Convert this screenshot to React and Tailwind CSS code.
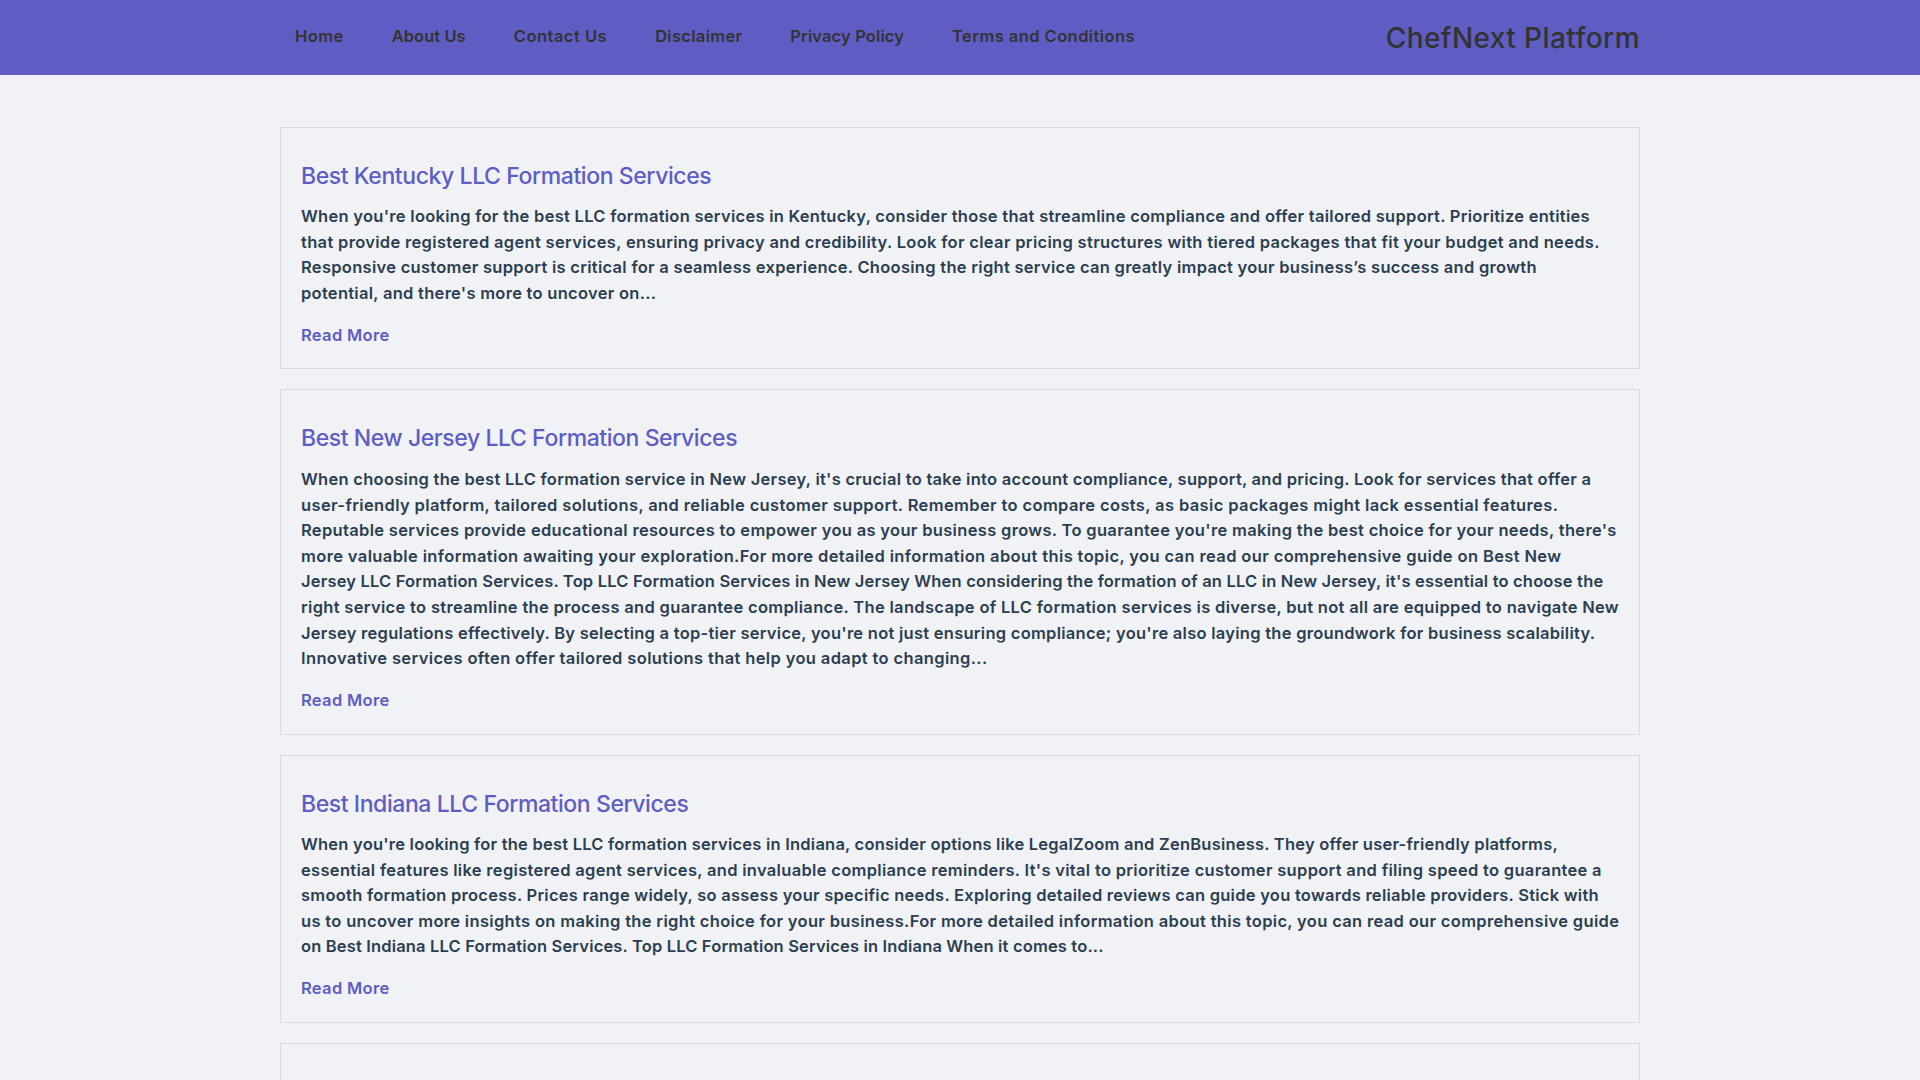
const nav = [
  ["Home", "tracking-[0.43px]"],
  ["About Us", "tracking-[0.05px]"],
  ["Contact Us", "tracking-[0.49px]"],
  ["Disclaimer", "tracking-[0.3px]"],
  ["Privacy Policy", "tracking-[0.12px]"],
  ["Terms and Conditions", "tracking-[0.43px]"],
];
const posts = [
  { title: "Best Kentucky LLC Formation Services", pad: "pt-[31px] pb-[19px]", gap: "mt-[11px]", more: "mt-[17px]", lines: [
    ["When you're looking for the best LLC formation services in Kentucky, consider those that streamline compliance and offer tailored support. Prioritize entities", "tracking-[0.277px]"],
    ["that provide registered agent services, ensuring privacy and credibility. Look for clear pricing structures with tiered packages that fit your budget and needs.", "tracking-[0.32px]"],
    ["Responsive customer support is critical for a seamless experience. Choosing the right service can greatly impact your business’s success and growth", "tracking-[0.286px]"],
    ["potential, and there's more to uncover on...", "tracking-[0.28px]"],
  ]},
  { title: "Best New Jersey LLC Formation Services", pad: "pt-[31px] pb-[20.6px]", gap: "mt-[12px]", more: "mt-[16px]", lines: [
    ["When choosing the best LLC formation service in New Jersey, it's crucial to take into account compliance, support, and pricing. Look for services that offer a", "tracking-[0.273px]"],
    ["user-friendly platform, tailored solutions, and reliable customer support. Remember to compare costs, as basic packages might lack essential features.", "tracking-[0.369px]"],
    ["Reputable services provide educational resources to empower you as your business grows. To guarantee you're making the best choice for your needs, there's", "tracking-[0.32px]"],
    ["more valuable information awaiting your exploration.For more detailed information about this topic, you can read our comprehensive guide on Best New", "tracking-[0.373px]"],
    ["Jersey LLC Formation Services. Top LLC Formation Services in New Jersey When considering the formation of an LLC in New Jersey, it's essential to choose the", "tracking-[0.18px]"],
    ["right service to streamline the process and guarantee compliance. The landscape of LLC formation services is diverse, but not all are equipped to navigate New", "tracking-[0.32px]"],
    ["Jersey regulations effectively. By selecting a top-tier service, you're not just ensuring compliance; you're also laying the groundwork for business scalability.", "tracking-[0.266px]"],
    ["Innovative services often offer tailored solutions that help you adapt to changing...", "tracking-[0.363px]"],
  ]},
  { title: "Best Indiana LLC Formation Services", pad: "pt-[31px] pb-[20.4px]", gap: "mt-[11px]", more: "mt-[16px]", lines: [
    ["When you're looking for the best LLC formation services in Indiana, consider options like LegalZoom and ZenBusiness. They offer user-friendly platforms,", "tracking-[0.22px]"],
    ["essential features like registered agent services, and invaluable compliance reminders. It's vital to prioritize customer support and filing speed to guarantee a", "tracking-[0.31px]"],
    ["smooth formation process. Prices range widely, so assess your specific needs. Exploring detailed reviews can guide you towards reliable providers. Stick with", "tracking-[0.258px]"],
    ["us to uncover more insights on making the right choice for your business.For more detailed information about this topic, you can read our comprehensive guide", "tracking-[0.33px]"],
    ["on Best Indiana LLC Formation Services. Top LLC Formation Services in Indiana When it comes to...", "tracking-[0.162px]"],
  ]},
];

export default function App() {
  return (
    <div className="h-screen overflow-hidden bg-[#f0f2f6] font-['Inter',sans-serif]">
      <header className="h-[75px] bg-[#5f5dc4]">
        <div className="mx-auto flex h-full w-[1360px] items-center justify-between">
          <nav className="flex gap-12 pl-[15px] pb-[3px]">
            {nav.map(([n, t]) => (
              <a key={n} className={`text-[16.5px] font-semibold text-[#333333] ${t}`}>{n}</a>
            ))}
          </nav>
          <div className="text-[28px] font-medium text-[#333333] tracking-[0.42px]">ChefNext Platform</div>
        </div>
      </header>
      <main className="mx-auto flex w-[1360px] flex-col gap-5 pt-[52px]">
        {posts.map((p) => (
          <article key={p.title} className={`border border-[#d8dbe0] px-5 ${p.pad}`}>
            <h2 className="text-[23px] leading-[34px] font-medium tracking-[-0.42px] text-[#5f5dc4]">{p.title}</h2>
            <p className={`${p.gap} text-[16.5px] leading-[25.6px] font-semibold text-[#2c3e50] whitespace-nowrap`}>
              {p.lines.map(([l, t], i) => (
                <span key={i} className={`block ${t}`}>{l}</span>
              ))}
            </p>
            <a className={`${p.more} block text-[16.5px] leading-[25.6px] font-semibold tracking-[0.32px] text-[#5f5dc4]`}>Read More</a>
          </article>
        ))}
        <article className="h-[200px] border border-[#d8dbe0]" />
      </main>
    </div>
  );
}
